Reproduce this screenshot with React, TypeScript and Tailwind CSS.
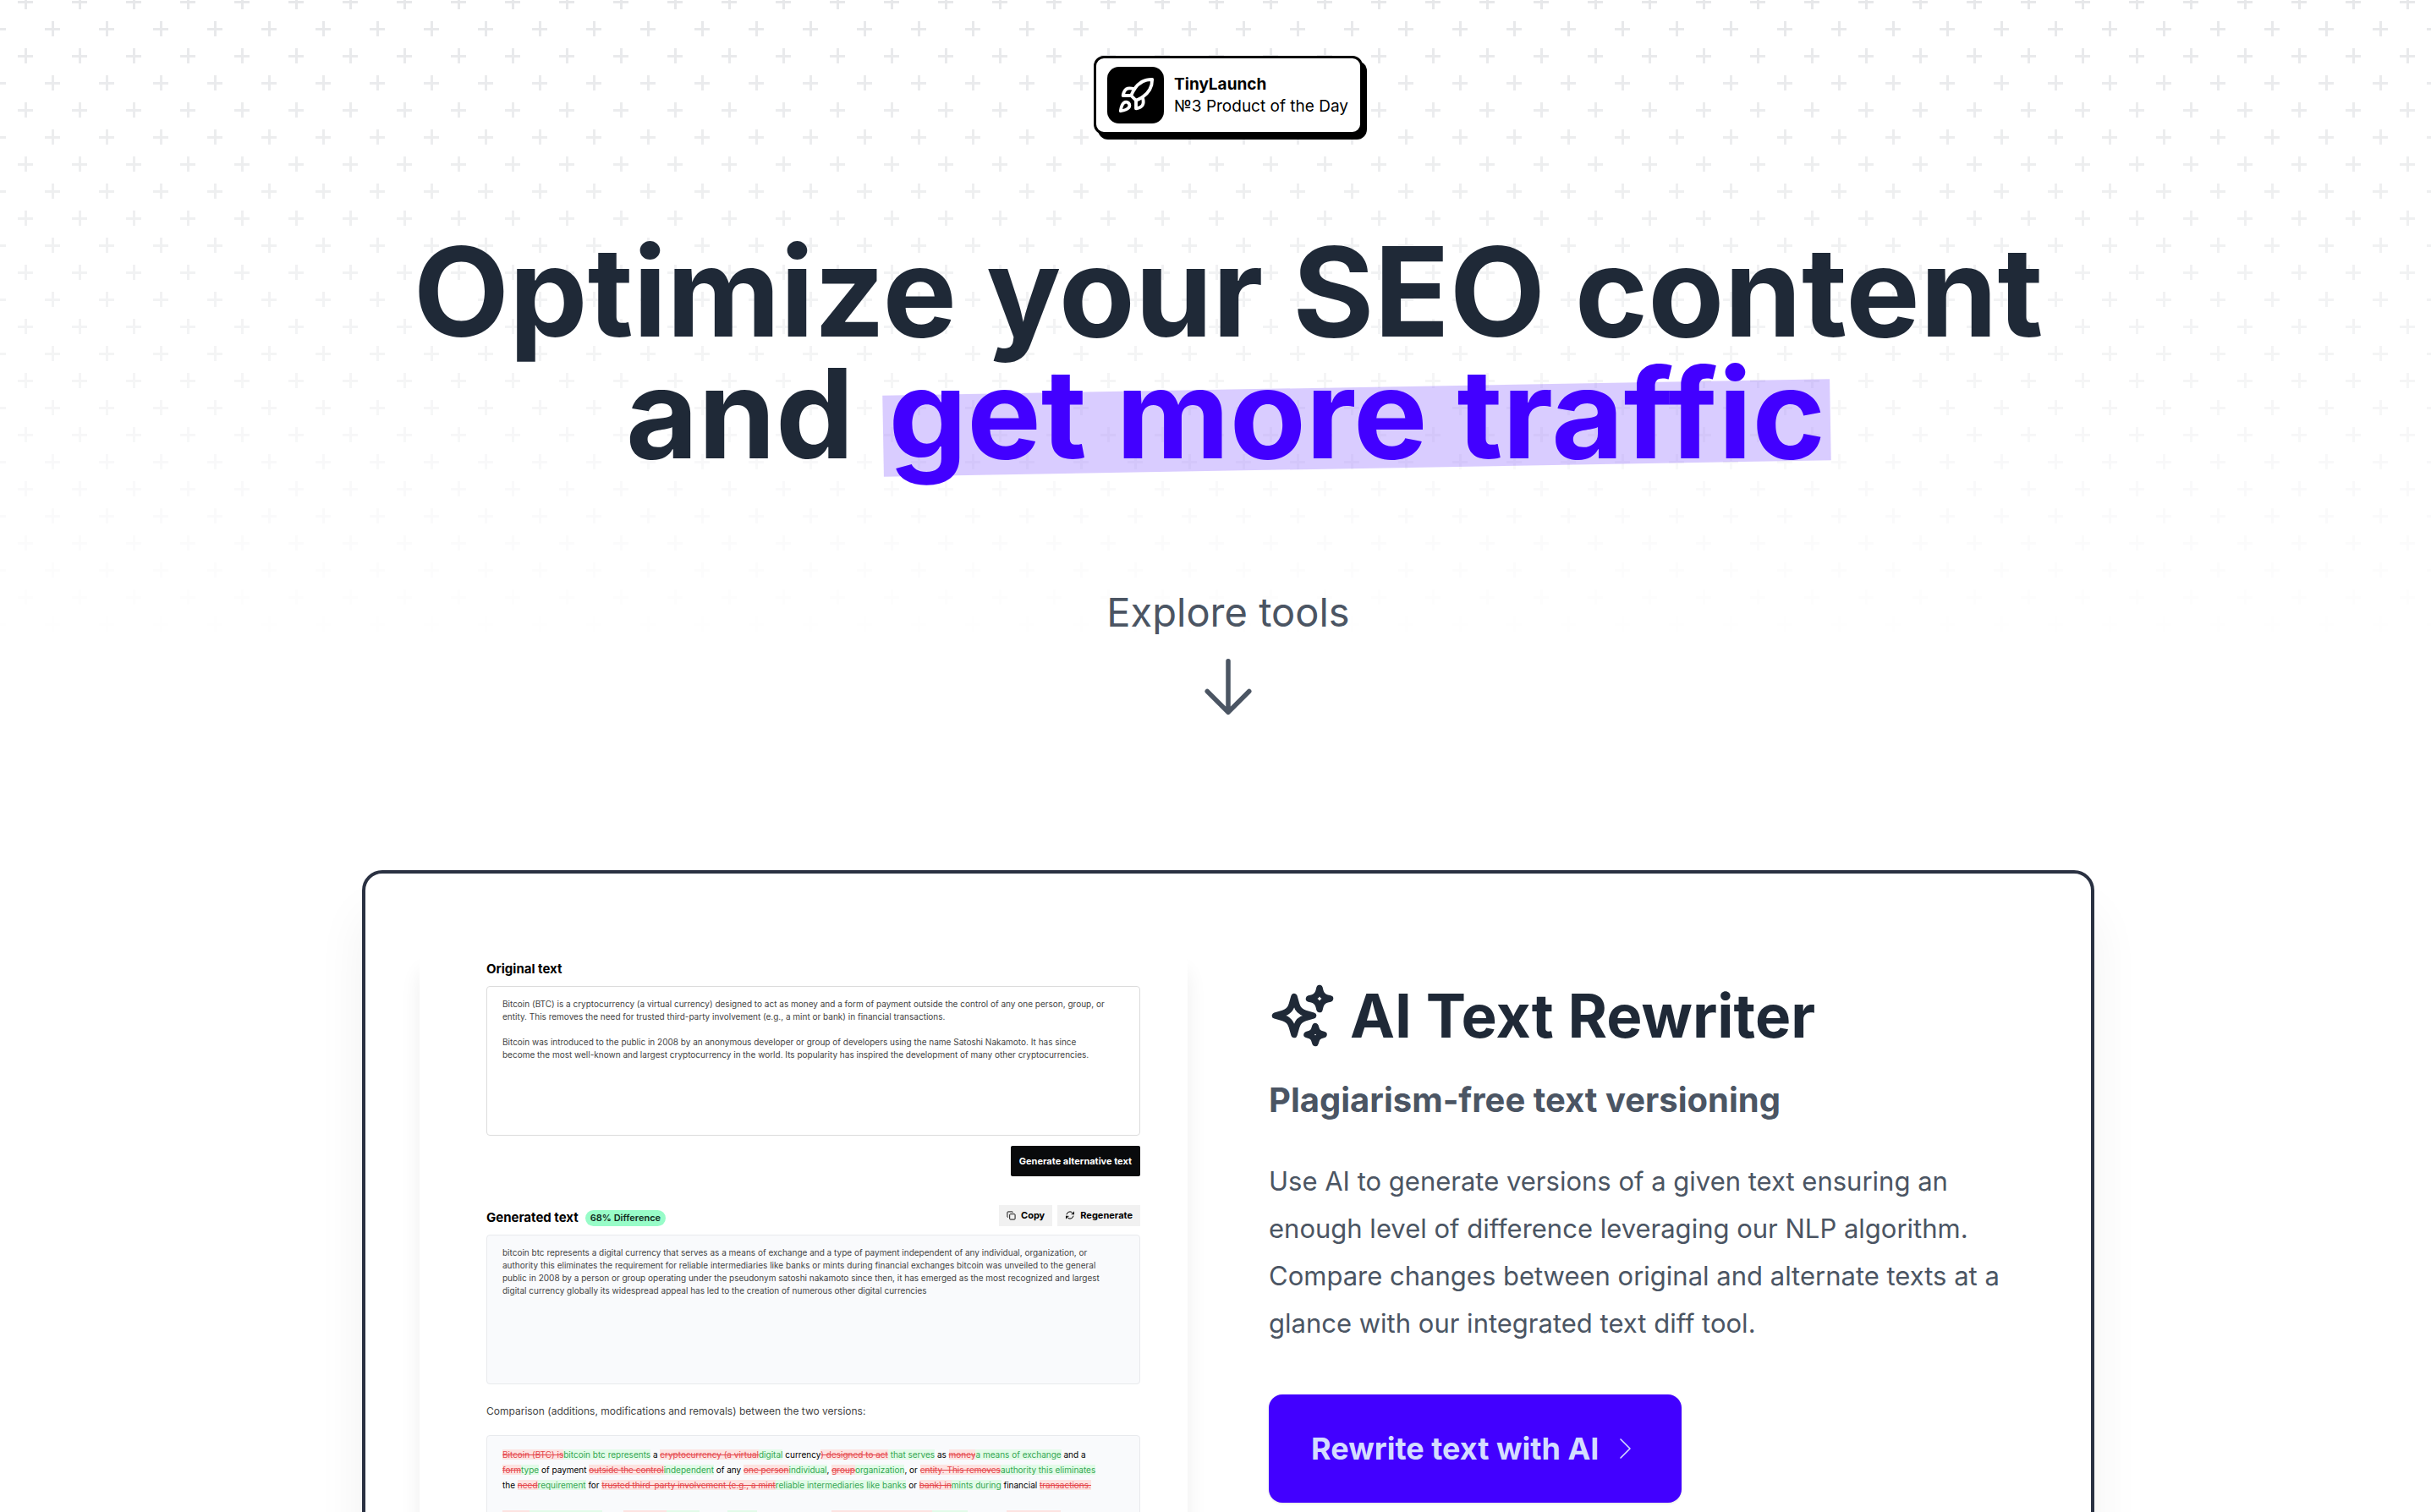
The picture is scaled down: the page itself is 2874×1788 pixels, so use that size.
import React from "react";
import { Rocket } from "lucide-react";

const ORIGINAL_TEXT = [
  "Bitcoin (BTC) is a cryptocurrency (a virtual currency) designed to act as money and a form of payment outside the control of any one person, group, or",
  "entity. This removes the need for trusted third-party involvement (e.g., a mint or bank) in financial transactions.",
  "",
  "Bitcoin was introduced to the public in 2008 by an anonymous developer or group of developers using the name Satoshi Nakamoto. It has since",
  "become the most well-known and largest cryptocurrency in the world. Its popularity has inspired the development of many other cryptocurrencies.",
].join("\n");

const GENERATED_TEXT = [
  "bitcoin btc represents a digital currency that serves as a means of exchange and a type of payment independent of any individual, organization, or",
  "authority this eliminates the requirement for reliable intermediaries like banks or mints during financial exchanges bitcoin was unveiled to the general",
  "public in 2008 by a person or group operating under the pseudonym satoshi nakamoto since then, it has emerged as the most recognized and largest",
  "digital currency globally its widespread appeal has led to the creation of numerous other digital currencies",
].join("\n");

type Part = ["del" | "ins" | "same", string];

const DIFF: Part[][] = [
  [
    ["del", "Bitcoin (BTC) is"], ["ins", "bitcoin btc represents"], ["same", " a "],
    ["del", "cryptocurrency (a virtual"], ["ins", "digital"], ["same", " currency"],
    ["del", ") designed to act"], ["ins", " that serves"], ["same", " as "],
    ["del", "money"], ["ins", "a means of exchange"], ["same", " and a"],
  ],
  [
    ["del", "form"], ["ins", "type"], ["same", " of payment "],
    ["del", "outside the control"], ["ins", "independent"], ["same", " of any "],
    ["del", "one person"], ["ins", "individual"], ["same", ", "],
    ["del", "group"], ["ins", "organization"], ["same", ", or "],
    ["del", "entity. This removes"], ["ins", "authority this eliminates"],
  ],
  [
    ["same", "the "], ["del", "need"], ["ins", "requirement"], ["same", " for "],
    ["del", "trusted third-party involvement (e.g., a mint"],
    ["ins", "reliable intermediaries like banks"], ["same", " or "],
    ["del", "bank) in"], ["ins", "mints during"], ["same", " financial "],
    ["del", "transactions."],
  ],
  [],
  [
    ["del", "Bitcoin"], ["ins", "exchanges bitcoin"], ["same", " was "],
    ["del", "introduced"], ["ins", "unveiled"], ["same", " to the "],
    ["ins", "general"], ["same", " public in 2008 by "],
    ["del", "an anonymous developer"], ["ins", "a person"], ["same", " or group "],
    ["del", "of developers"],
  ],
];

function CrossPattern() {
  return (
    <svg
      aria-hidden="true"
      className="absolute inset-x-0 top-0 h-[770px] w-full text-[#e7e8ea] [mask-image:linear-gradient(to_bottom,black,transparent)]"
    >
      <defs>
        <pattern id="crosses" width="64" height="64" patternUnits="userSpaceOnUse">
          <g fill="currentColor">
            <path d="M21 1h18v3H21zM29 0h3v11h-3zM29 57h3v7h-3z" />
            <path d="M53 33h11v3H53zM0 33h7v3H0zM61 25h3v18h-3z" />
          </g>
        </pattern>
      </defs>
      <rect width="100%" height="100%" fill="url(#crosses)" />
    </svg>
  );
}

function LaunchBadge() {
  return (
    <a
      href="#tinylaunch"
      className="flex items-center gap-3 rounded-[12px] border-3 border-black bg-white py-[10px] pr-[14px] pl-[13px] text-[19px] leading-[26px] text-black shadow-[5px_6px_0_#000]"
    >
      <span className="flex size-[67px] items-center justify-center rounded-[14px] bg-black text-white">
        <Rocket size={46} strokeWidth={2} />
      </span>
      <span className="flex flex-col">
        <span className="font-bold">TinyLaunch</span>
        <span>№3 Product of the Day</span>
      </span>
    </a>
  );
}

function SparklesIcon() {
  return (
    <svg aria-hidden="true" viewBox="0 0 24 24" className="size-20" fill="none" stroke="currentColor" strokeWidth="2.25" strokeLinecap="round" strokeLinejoin="round">
      <path d="M9.813 15.904 9 18.75l-.813-2.846a4.5 4.5 0 0 0-3.09-3.09L2.25 12l2.846-.813a4.5 4.5 0 0 0 3.09-3.09L9 5.25l.813 2.846a4.5 4.5 0 0 0 3.09 3.09L15.75 12l-2.846.813a4.5 4.5 0 0 0-3.09 3.09Z" />
      <path d="M18.259 8.715 18 9.75l-.259-1.035a3.375 3.375 0 0 0-2.455-2.456L14.25 6l1.036-.259a3.375 3.375 0 0 0 2.455-2.456L18 2.25l.259 1.035a3.375 3.375 0 0 0 2.456 2.456L21.75 6l-1.035.259a3.375 3.375 0 0 0-2.456 2.456Z" />
      <path d="M16.894 20.567 16.5 21.75l-.394-1.183a2.25 2.25 0 0 0-1.423-1.423L13.5 18.75l1.183-.394a2.25 2.25 0 0 0 1.423-1.423l.394-1.183.394 1.183a2.25 2.25 0 0 0 1.423 1.423l1.183.394-1.183.394a2.25 2.25 0 0 0-1.423 1.423Z" />
    </svg>
  );
}

function CopyIcon() {
  return (
    <svg aria-hidden="true" viewBox="0 0 24 24" className="size-[11px]" fill="none" stroke="currentColor" strokeWidth="2">
      <rect x="8" y="8" width="14" height="14" rx="2" />
      <path d="M4 16H3a1 1 0 0 1-1-1V4a2 2 0 0 1 2-2h11a1 1 0 0 1 1 1v1" />
    </svg>
  );
}

function RefreshIcon() {
  return (
    <svg aria-hidden="true" viewBox="0 0 24 24" className="size-[12px]" fill="none" stroke="currentColor" strokeWidth="2" strokeLinecap="round" strokeLinejoin="round">
      <path d="M16.023 9.348h4.992M2.985 19.644v-4.992m0 0h4.992m-4.993 0 3.181 3.183a8.25 8.25 0 0 0 13.803-3.7M4.031 9.865a8.25 8.25 0 0 1 13.803-3.7l3.181 3.182m0-4.991v4.99" />
    </svg>
  );
}

function DiffPart({ part }: { part: Part }) {
  const [kind, text] = part;
  if (kind === "del") return <del className="bg-[#fde3e1] text-[#e5484d]">{text}</del>;
  if (kind === "ins") return <ins className="bg-[#e2fbe8] text-[#35a853] no-underline">{text}</ins>;
  return <span>{text}</span>;
}

function RewriterPreview() {
  return (
    <div className="mt-[30px] h-[740px] overflow-hidden rounded-[12px] bg-white pt-[9px] pr-[56px] pl-[79px] shadow-[0_20px_24px_rgba(0,0,0,0.07)]">
      <label htmlFor="original" className="block text-[15px] leading-5 font-bold text-black">
        Original text
      </label>
      <textarea
        id="original"
        readOnly
        wrap="off"
        value={ORIGINAL_TEXT}
        className="mt-[10px] block h-[177px] w-full resize-none overflow-hidden rounded-[4px] border border-[#dcdcdc] bg-white px-[18px] py-[13px] text-[10px] leading-[15px] text-[#444]"
      />
      <div className="mt-3 flex justify-end">
        <button type="button" className="h-9 rounded-[2px] bg-[#090a0c] px-[10px] text-[11px] font-bold text-white">
          Generate alternative text
        </button>
      </div>
      <div className="mt-[33px] flex items-center justify-between text-black">
        <div className="flex items-center gap-2 pt-[6px]">
          <label htmlFor="generated" className="text-[15px] leading-5 font-bold">
            Generated text
          </label>
          <span className="rounded-full bg-[#98fcc8] px-[6px] text-[11px] leading-[19px] font-semibold text-[#10291c]">
            68% Difference
          </span>
        </div>
        <div className="flex gap-[6px] text-[11px] font-bold">
          <button type="button" className="flex h-[25px] items-center gap-[6px] bg-[#f1f1f1] px-[9px]">
            <CopyIcon />
            Copy
          </button>
          <button type="button" className="flex h-[25px] items-center gap-[6px] bg-[#f1f1f1] px-[9px]">
            <RefreshIcon />
            Regenerate
          </button>
        </div>
      </div>
      <textarea
        id="generated"
        readOnly
        wrap="off"
        value={GENERATED_TEXT}
        className="mt-[10px] block h-[177px] w-full resize-none overflow-hidden rounded-[4px] border border-[#e8eaed] bg-[#f9fafc] px-[18px] py-[13px] text-[10px] leading-[15px] text-[#444]"
      />
      <p className="mt-[22px] text-[12px] leading-5 text-[#444]">
        Comparison (additions, modifications and removals) between the two versions:
      </p>
      <div className="mt-[18px] h-[177px] rounded-[4px] border border-[#e8eaed] bg-[#f9fafc] px-[18px] py-[13px] text-[10px] leading-[18px] whitespace-pre text-black">
        {DIFF.map((line, i) => (
          <p key={i} className="min-h-[18px]">
            {line.map((part, j) => (
              <DiffPart key={j} part={part} />
            ))}
          </p>
        ))}
      </div>
    </div>
  );
}

function RewriterIntro() {
  return (
    <div className="pt-16 text-[#4b5563]">
      <h2 className="flex items-center gap-4 text-[71px] leading-[80px] font-bold text-[#1f2937]">
        <SparklesIcon />
        AI Text Rewriter
      </h2>
      <p className="mt-8 text-[40px] leading-[56px] font-bold">Plagiarism-free text versioning</p>
      <p className="mt-10 text-[31px] leading-[56px]">
        Use AI to generate versions of a given text ensuring an
        <br />
        enough level of difference leveraging our NLP algorithm.
        <br />
        Compare changes between original and alternate texts at a
        <br />
        glance with our integrated text diff tool.
      </p>
      <a
        href="#rewriter"
        className="mt-14 inline-flex h-32 items-center gap-6 rounded-[16px] bg-[#4200ff] pr-[60px] pl-[50px] text-[36px] font-bold text-[#d4dcff] shadow-sm"
      >
        Rewrite text with AI
        <svg aria-hidden="true" viewBox="0 0 14 26" className="h-[26px] w-[14px]" fill="none" stroke="currentColor" strokeWidth="1.6" strokeLinecap="round" strokeLinejoin="round">
          <path d="M2 2l11 11L2 24" />
        </svg>
      </a>
    </div>
  );
}

export default function App() {
  return (
    <div className="relative min-h-screen overflow-hidden bg-white font-['Inter',sans-serif]">
      <CrossPattern />
      <main className="relative flex flex-col items-center pt-[66px] pb-24 pl-[30px]">
        <LaunchBadge />
        <h1 className="mt-[114px] text-center text-[147px] leading-[144px] font-bold whitespace-nowrap text-[#1f2937]">
          Optimize your SEO content
          <br />
          and{" "}
          <span className="relative inline-block px-[6px] text-[#4200ff]">
            <span aria-hidden="true" className="absolute inset-x-0 top-[41px] h-24 -rotate-1 bg-[#4200ff]/20" />
            <span className="relative">get more traffic</span>
          </span>
        </h1>
        <a href="#tools" className="mt-[135px] flex flex-col items-center gap-4 text-[47px] leading-[56px] text-[#4b5563]">
          Explore tools
          <svg aria-hidden="true" viewBox="0 0 256 256" className="size-[88px]" fill="none" stroke="currentColor" strokeWidth="16" strokeLinecap="round" strokeLinejoin="round">
            <path d="M128 40v176M56 144l72 72 72-72" />
          </svg>
        </a>
        <section
          id="tools"
          className="mt-[173px] grid w-full max-w-[2048px] grid-cols-2 gap-24 rounded-[24px] border-4 border-[#2a3142] bg-white p-16 shadow-[0_50px_60px_rgba(0,0,0,0.06)]"
        >
          <RewriterPreview />
          <RewriterIntro />
        </section>
      </main>
    </div>
  );
}
